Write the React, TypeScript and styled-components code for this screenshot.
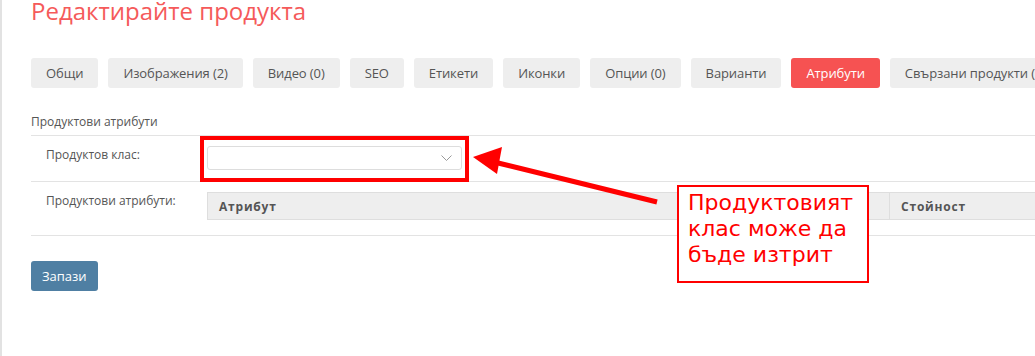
import React from 'react';
import styled, { createGlobalStyle } from 'styled-components';

const GlobalStyle = createGlobalStyle`
  html, body {
    margin: 0;
    padding: 0;
    background: #fff;
  }
  body {
    font-family: 'Open Sans', 'Liberation Sans', sans-serif;
    color: #555;
  }
`;

const Page = styled.div`
  position: relative;
  height: 356px;
  box-sizing: border-box;
  border-left: 2px solid #e2e2e2;
  padding-left: 29px;
  overflow: hidden;
`;

const Title = styled.h1`
  margin: 0;
  font-size: 24px;
  line-height: 21px;
  font-weight: 400;
  color: #f55a5a;
`;

const TabBar = styled.div`
  display: flex;
  flex-wrap: nowrap;
  gap: 10px;
  margin-top: 37px;
`;

const Tab = styled.button<{ $active?: boolean }>`
  flex-shrink: 0;
  height: 30px;
  padding: 0 15px;
  border: none;
  border-radius: 3px;
  font-family: inherit;
  font-size: 13px;
  letter-spacing: -0.1px;
  white-space: nowrap;
  background: ${p => (p.$active ? '#f65252' : '#eeeeee')};
  color: ${p => (p.$active ? '#fff' : '#555')};
`;

const Section = styled.section`
  margin-top: 25px;
`;

const SectionTitle = styled.div`
  font-size: 12px;
  line-height: 17px;
  padding-bottom: 5px;
  border-bottom: 1px solid #e3e3e3;
`;

const FormRow = styled.div<{ $tail?: number }>`
  display: grid;
  grid-template-columns: 176px minmax(0, 1fr);
  padding: 10px 0 ${p => p.$tail ?? 11}px;
  border-bottom: 1px solid #e3e3e3;
`;

const Label = styled.label`
  padding-left: 15px;
  font-size: 12px;
  line-height: 17px;
`;

const SelectWrap = styled.div`
  position: relative;
  width: 255px;
`;

const SelectBox = styled.div`
  box-sizing: border-box;
  height: 24px;
  border: 1px solid #dddddd;
  border-radius: 3px;
  background: #fff;
  display: flex;
  align-items: center;
  justify-content: flex-end;
  padding-right: 9px;
`;

const Highlight = styled.div`
  position: absolute;
  top: -10px;
  left: -7px;
  right: -7px;
  bottom: -12px;
  border: 4px solid #ff0000;
`;

const Table = styled.div`
  display: grid;
  grid-template-columns: 683px 300px;
  width: 983px;
`;

const HeadCell = styled.div<{ $first?: boolean }>`
  height: 28px;
  box-sizing: border-box;
  padding: 0 11px;
  display: flex;
  align-items: center;
  background: #eeeeee;
  border: 1px solid #dedede;
  border-left-width: ${p => (p.$first ? 1 : 0)}px;
  font-size: 12px;
  font-weight: 700;
  letter-spacing: 0.8px;
  color: #555;
`;

const SaveButton = styled.button`
  display: block;
  margin-top: 25px;
  height: 30px;
  padding: 0 11px;
  border: none;
  border-radius: 3px;
  background: #4f7fa3;
  color: #fff;
  font-family: inherit;
  font-size: 13px;
`;

const Callout = styled.div`
  position: absolute;
  left: 675px;
  top: 185px;
  width: 192px;
  height: 98px;
  box-sizing: border-box;
  border: 2px solid #ff0000;
  background: #fff;
  padding: 3px 0 0 9px;
  font-family: 'DejaVu Sans', sans-serif;
  font-size: 22px;
  line-height: 26px;
  color: #ff0000;
`;

const ArrowSvg = styled.svg`
  position: absolute;
  left: 468px;
  top: 140px;
`;

const tabs = [
  'Общи',
  'Изображения (2)',
  'Видео (0)',
  'SEO',
  'Етикети',
  'Иконки',
  'Опции (0)',
  'Варианти',
  'Атрибути',
  'Свързани продукти (0)',
];

export default function App() {
  return (
    <>
      <GlobalStyle />
      <Page>
        <Title>Редактирайте продукта</Title>
        <TabBar>
          {tabs.map(t => (
            <Tab key={t} $active={t === 'Атрибути'}>
              {t}
            </Tab>
          ))}
        </TabBar>

        <Section>
          <SectionTitle>Продуктови атрибути</SectionTitle>
          <FormRow>
            <Label>Продуктов клас:</Label>
            <SelectWrap>
              <SelectBox>
                <svg width="11" height="6" viewBox="0 0 11 6">
                  <path d="M0.5 0.5 L5.5 5.5 L10.5 0.5" fill="none" stroke="#999" strokeWidth="1" />
                </svg>
              </SelectBox>
              <Highlight />
            </SelectWrap>
          </FormRow>
          <FormRow $tail={15}>
            <Label>Продуктови атрибути:</Label>
            <Table>
              <HeadCell $first>Атрибут</HeadCell>
              <HeadCell>Стойност</HeadCell>
            </Table>
          </FormRow>
        </Section>

        <SaveButton>Запази</SaveButton>

        <ArrowSvg width="195" height="70" viewBox="0 0 195 70">
          <line x1="187" y1="62" x2="24" y2="22" stroke="#ff0000" strokeWidth="5" />
          <polygon points="3,17 32,7 27,34" fill="#ff0000" />
        </ArrowSvg>
        <Callout>
          Продуктовият
          <br />
          клас може да
          <br />
          бъде изтрит
        </Callout>
      </Page>
    </>
  );
}
